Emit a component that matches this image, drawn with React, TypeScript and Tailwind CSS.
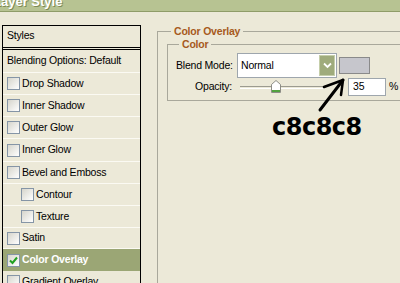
import React from 'react';

const Check = ({ checked }: { checked?: boolean }) => (
  <span className="flex h-[13px] w-[13px] shrink-0 items-center justify-center border border-[#8595a6] bg-linear-to-br from-[#d6d5cc] to-white">
    {checked && (
      <svg width="9" height="9" viewBox="0 0 9 9">
        <path d="M1 4.5 L3.5 7 L8 1.5" stroke="#21a121" strokeWidth="2" fill="none" />
      </svg>
    )}
  </span>
);

type Row = { t: string; h: string; indent?: boolean; active?: boolean };

const rows: Row[] = [
  { t: 'Drop Shadow', h: 'h-[22px]' },
  { t: 'Inner Shadow', h: 'h-[22px]' },
  { t: 'Outer Glow', h: 'h-[22px]' },
  { t: 'Inner Glow', h: 'h-[23px]' },
  { t: 'Bevel and Emboss', h: 'h-[22px]' },
  { t: 'Contour', h: 'h-[22px]', indent: true },
  { t: 'Texture', h: 'h-[22px]', indent: true },
  { t: 'Satin', h: 'h-[21px]' },
  { t: 'Color Overlay', h: 'h-[22px]', active: true },
  { t: 'Gradient Overlay', h: 'h-[22px]' },
];

export default function App() {
  return (
    <div
      className="relative h-[283px] w-[400px] overflow-hidden bg-[#ece9d8] text-[10.5px] tracking-[-0.2px] text-black"
      style={{ fontFamily: '"Liberation Sans", Arial, sans-serif' }}
    >
      {/* title bar */}
      <div className="h-[12px] overflow-hidden border-b border-[#8f9c68] bg-[#b7c392]">
        <div className="ml-[-7px] mt-[-5px] whitespace-nowrap text-[13px] font-bold leading-[13px] tracking-normal text-white [text-shadow:1px_1px_0_#7d8a55]">
          Layer Style
        </div>
      </div>

      <div className="flex items-start">
        {/* left list */}
        <div className="ml-[2px] mt-[13px] w-[139px] shrink-0 border-l border-r border-t border-black">
          <div className="flex h-[24px] items-center border-b-[3px] border-double border-black pb-[1px] pl-[4px]">
            Styles
          </div>
          <div className="flex h-[23px] items-center whitespace-nowrap border-b border-[#fbfaf3] pl-[4px]">
            Blending Options: Default
          </div>
          {rows.map((r) => (
            <div
              key={r.t}
              className={`flex items-center whitespace-nowrap ${r.h} ${
                r.active ? 'bg-[#9ba675] font-bold text-white' : 'border-b border-[#fbfaf3]'
              } ${r.indent ? 'pl-[18px]' : 'pl-[4px]'}`}
            >
              <Check checked={r.active} />
              <span className="ml-[2px]">{r.t}</span>
            </div>
          ))}
        </div>

        {/* right side */}
        <div className="ml-[16px] mt-[13px] shrink-0">
          <fieldset className="h-[260px] w-[260px] border-l border-t border-[#a9a89b] p-0">
            <legend className="ml-[13px] px-[3px] text-[10.5px] font-bold leading-[13px] text-[#a65a1c]">
              Color Overlay
            </legend>
            <fieldset className="ml-[9px] w-[240px] border-b border-l border-t border-[#a9a89b] p-0 pb-[4px]">
              <legend className="ml-[11px] px-[3px] font-bold leading-[13px] text-[#a65a1c]">Color</legend>
              <div className="mt-[2px] flex items-center pl-[8px]">
                <span className="w-[61px] shrink-0">Blend Mode:</span>
                <div className="flex h-[25px] w-[100px] shrink-0 items-stretch border border-[#9ea6ad] bg-white">
                  <span className="flex flex-1 items-center pl-[3px]">Normal</span>
                  <span className="my-[1px] mr-[1px] flex w-[16px] items-center justify-center border border-[#c5ceaa] bg-[#9fab7c]">
                    <svg width="9" height="7" viewBox="0 0 9 7">
                      <path d="M1 1.5 L4.5 5 L8 1.5" stroke="white" strokeWidth="1.8" fill="none" />
                    </svg>
                  </span>
                </div>
                <span className="ml-[2px] h-[17px] w-[31px] shrink-0 border border-[#8a8a8a] bg-[#c6c6cc]" />
              </div>
              <div className="flex h-[18px] items-center pl-[8px]">
                <span className="w-[56px] shrink-0 text-right">Opacity:</span>
                <div className="relative ml-[8px] h-[18px] w-[84px] shrink-0">
                  <div className="mt-[8px] h-[3px] border-b border-t border-b-white border-t-[#9c9b90]" />
                  <svg className="absolute left-[31px] top-[2px]" width="10" height="13" viewBox="0 0 10 13">
                    <path d="M5 0.5 L9.5 4.5 L9.5 12.5 L0.5 12.5 L0.5 4.5 Z" fill="white" stroke="#8d8d86" />
                    <rect x="1" y="10" width="8" height="2" fill="#52a23f" />
                  </svg>
                </div>
                <div className="ml-[24px] flex h-[18px] w-[38px] shrink-0 items-center border border-[#9ea6ad] bg-white pl-[4px]">
                  35
                </div>
                <span className="ml-[3px]">%</span>
              </div>
            </fieldset>
            <div
              className="ml-[114px] mt-[14px] text-[24px] font-bold leading-[24px] tracking-[-0.5px]"
              style={{ fontFamily: '"DejaVu Sans", Verdana, sans-serif' }}
            >
              c8c8c8
            </div>
          </fieldset>
        </div>
      </div>

      {/* hand-drawn arrow annotation */}
      <svg className="pointer-events-none absolute left-0 top-0" width="400" height="283" viewBox="0 0 400 283">
        <path d="M320 110 L343 80" stroke="black" strokeWidth="3" fill="none" strokeLinecap="round" />
        <path d="M324 87 L343 80 L341 95" stroke="black" strokeWidth="2.5" fill="none" strokeLinecap="round" strokeLinejoin="round" />
      </svg>
    </div>
  );
}
